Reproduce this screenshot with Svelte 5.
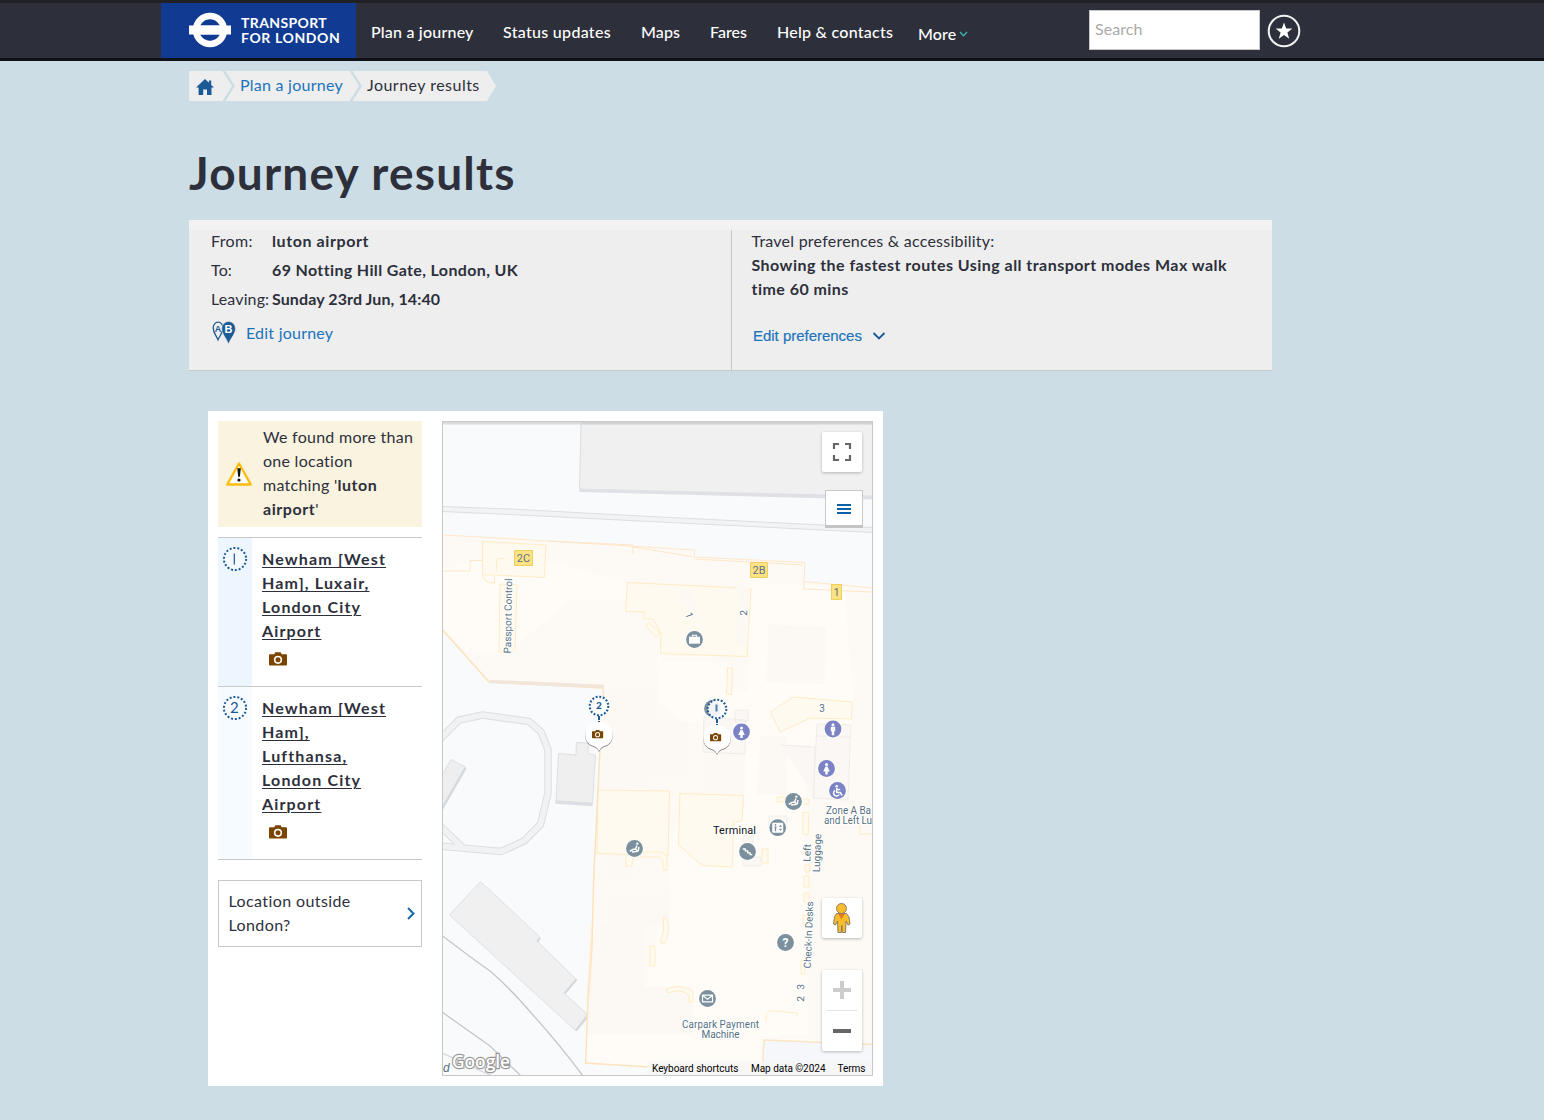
<script>
  const nav = [
    { label: 'Plan a journey', cls: 'n1' },
    { label: 'Status updates', cls: 'n2' },
    { label: 'Maps', cls: 'n3' },
    { label: 'Fares', cls: 'n4' },
    { label: 'Help & contacts', cls: 'n5' }
  ];
  const results = [
    { n: 1, lines: ['Newham [West', 'Ham], Luxair,', 'London City', 'Airport'] },
    { n: 2, lines: ['Newham [West', 'Ham],', 'Lufthansa,', 'London City', 'Airport'] }
  ];
  const markers = [
    { n: 2, x: 599, y: 706 },
    { n: 1, x: 717, y: 709 }
  ];
  const pois = [
    { kind: 'bag', x: 694.5, y: 639.5 },
    { kind: 'none', x: 712.5, y: 708.5 },
    { kind: 'woman', x: 741.5, y: 732, blue: true },
    { kind: 'man', x: 833, y: 729, blue: true },
    { kind: 'woman', x: 826.5, y: 768.5, blue: true },
    { kind: 'wheel', x: 837.5, y: 790.5, blue: true },
    { kind: 'seat', x: 793.5, y: 801.5 },
    { kind: 'lift', x: 777.7, y: 827.7 },
    { kind: 'stairs', x: 747.5, y: 851.5 },
    { kind: 'seat', x: 634.5, y: 848.5 },
    { kind: 'help', x: 785.5, y: 942.5 },
    { kind: 'mail', x: 707.5, y: 998.5 }
  ];
</script>

{#snippet camera(color)}
  <path fill={color} fill-rule="evenodd" d="M1 2.2h4.2L6.4.2h5.2l1.2 2h4.2q1 0 1 1v9.4q0 1-1 1H1q-1 0-1-1V3.200q0-1 1-1zM9 3.700a4.100 4.100 0 1 0 0 8.200a4.100 4.100 0 1 0 0-8.200zM9 5.300a2.500 2.500 0 1 1 0 5a2.500 2.500 0 1 1 0-5z" />
{/snippet}

<header>
  <a class="brand" href="#home" aria-label="Home">
    <svg width="42" height="36" viewBox="0 0 42 36">
      <path d="M0 13.500h42v9H0z" fill="#fff" />
      <circle cx="21" cy="18" r="14" fill="none" stroke="#fff" stroke-width="6.500" />
      <path d="M6 13.500h30v9H6z" fill="#fff" />
    </svg>
    <span class="word"><span class="w1">TRANSPORT</span><span class="w2">FOR LONDON</span></span>
  </a>
  <nav>
    {#each nav as item}
      <a class={item.cls} href="#nav">{item.label}</a>
    {/each}
    <a class="more" href="#more">More<svg width="9" height="6" viewBox="0 0 9 6"><path d="M1 1l3.500 3.700L8 1" fill="none" stroke="#3fb5b5" stroke-width="1.300" /></svg></a>
  </nav>
  <div class="search">Search</div>
  <svg class="fav" width="34" height="34" viewBox="0 0 34 34">
    <circle cx="17" cy="17" r="15.300" fill="none" stroke="#f2f2f4" stroke-width="2" />
    <path d="M17 8.500l2.200 6h6.200l-5 3.900 1.800 6.300-5.200-3.800-5.200 3.800 1.800-6.300-5-3.900h6.200z" fill="#fff" />
  </svg>
</header>

<main>
  <div class="crumbs">
    <svg width="307" height="30" viewBox="0 0 307 30">
      <path d="M0 0h33.500l9.500 15-9.500 15H0zM36.500 0H160.500l9.500 15-9.500 15H36.500L46 15zM163.500 0H298l9 15-9 15H163.500L173 15z" fill="#eee" />
      <path d="M16 8l-9 8.600h2.600V24h4.600v-5.500h3.800V24h4.500v-7.400H25l-2.800-2.700V9.500h-2.300v2.200z" fill="#1c5a96" />
    </svg>
    <div class="trail"><a href="#plan">Plan a journey</a><span>Journey results</span></div>
  </div>

  <h1>Journey results</h1>

  <section class="summary">
    <div class="left">
      <div class="row"><span class="k from">From:</span><b class="v1">luton airport</b></div>
      <div class="row"><span class="k">To:</span><b class="v2">69 Notting Hill Gate, London, UK</b></div>
      <div class="row"><span class="k">Leaving:</span><b class="v3">Sunday 23rd Jun, 14:40</b></div>
      <a class="edit" href="#edit">
        <svg width="25" height="24" viewBox="0 0 25 24">
          <path d="M6 18.800C4 14 1.200 12 1.200 6.700A4.900 5.500 0 0 1 11 6.700C11 12 8 14 6 18.800z" fill="#eee" stroke="#1c5a96" stroke-width="1.300" />
          <text x="6" y="10.800" class="pin" fill="#1c5a96">A</text>
          <path d="M16.500 23C14 16.500 9.800 13 9.800 7.500A6.800 7 0 0 1 23.400 7.500C23.400 13 19 16.500 16.500 23z" fill="#1c5a96" stroke="#eee" stroke-width=".5" />
          <text x="16.700" y="11.700" class="pin big" fill="#fff">B</text>
        </svg>
        <span>Edit journey</span>
      </a>
    </div>
    <div class="right">
      <div class="pt">Travel preferences &amp; accessibility:</div>
      <b>Showing the fastest routes Using all transport modes Max walk<br />time 60 mins</b>
      <a class="prefs" href="#prefs">Edit preferences<svg width="14" height="9" viewBox="0 0 14 9"><path d="M1.500 1L7 6.500 12.500 1" fill="none" stroke="#1c5a96" stroke-width="1.900" /></svg></a>
    </div>
  </section>

  <section class="card">
    <div class="side">
      <div class="warn">
        <svg width="28" height="26" viewBox="0 0 28 26">
          <path d="M14 2.500L25.800 23.500H2.200z" fill="#fffef8" stroke="#fdbd10" stroke-width="2.400" stroke-linejoin="round" />
          <path d="M12.300 7.300h3.500l-.9 8.500h-1.700z" fill="#111" /><circle cx="14" cy="19" r="1.600" fill="#111" />
        </svg>
        <p>We found more than<br />one location<br />matching '<b>luton<br />airport</b>'</p>
      </div>
      <ol>
        {#each results as r}
          <li>
            <div class="num">
              <svg width="26" height="26" viewBox="0 0 26 26">
                <circle cx="13" cy="13" r="11.100" fill="#fff" fill-opacity=".35" stroke="#1c5a96" stroke-width="2" stroke-dasharray="2 1.874" />
                {#if r.n === 1}<path d="M12.300 7.500v11" stroke="#1c5a96" stroke-width="1.200" />{:else}<text x="12.400" y="18.300" class="numeral">2</text>{/if}
              </svg>
            </div>
            <div class="info">
              <a href="#result">{#each r.lines as line, i}{#if i}<br />{/if}{line}{/each}</a>
              <svg class="cam" width="18" height="14" viewBox="0 0 18 14">{@render camera('#7b4500')}</svg>
            </div>
          </li>
        {/each}
      </ol>
      <a class="outside" href="#outside">
        <span>Location outside<br />London?</span>
        <svg width="8" height="13" viewBox="0 0 8 13"><path d="M1 1l5.500 5.500L1 12" fill="none" stroke="#1c66a8" stroke-width="2" /></svg>
      </a>
    </div>

    <svg class="map" width="431" height="655" viewBox="442 421 431 655">
      <rect x="442" y="421" width="431" height="655" fill="#f8fafc" />
      <!-- neighbouring building and access road -->
      <path d="M581 421H873V498L579.500 491z" fill="#f0f0f0" />
      <path d="M581 424L579.500 489" stroke="#dedede" fill="none" />
      <path d="M579.500 488.500L660 490.500 873 495.500v4L579.500 492z" fill="#dfe1e6" />
      <path d="M442 506.500L510 509 660 517 873 527.500v5L660 522 510 514.500 442 511.500z" fill="#f2f3f4" stroke="#dddfe2" />
      <!-- ring road -->
      <path d="M438 741L459 720 482.500 715 529 721.500 541 732 548 749.500V793L540.500 824.500 524 841 501 851.500 462 848 438 846M438 824l24 23" fill="none" stroke="#dcdee0" stroke-width="7.500" />
      <path d="M438 741L459 720 482.500 715 529 721.500 541 732 548 749.500V793L540.500 824.500 524 841 501 851.500 462 848 438 846M438 824l24 23" fill="none" stroke="#f1f2f3" stroke-width="5.500" />
      <path d="M442 775L451 759.500 465.500 767 442 808z" fill="#eee" stroke="#dddfe2" />
      <path d="M465.500 768L442 809" stroke="#d5d9de" stroke-width="2.500" />
      <path d="M558.500 753.500L576 755 576.500 742.500 588.500 743 588 753.500 595.500 755 592.500 804 556 801.500z" fill="#efefef" stroke="#dfe0e3" />
      <path d="M555.500 802l37 2.500" stroke="#dcdee3" stroke-width="3.500" />
      <path d="M480.500 881.500L540 937 537 941 576.500 979.500 564.500 993.500 587 1014 575.500 1030.500 449.500 915z" fill="#f0f0f0" stroke="#e0e1e3" />
      <path d="M540 938l-3 4M576.500 979.500l-12 14M587 1017l-11 13.500" stroke="#d5d7da" stroke-width="2" />
      <path d="M442 935.500Q470 957 490 971Q510 988 533 1015Q560 1045 583 1076M442 1012L490 1046 521 1076" fill="none" stroke="#c4c7ca" stroke-width="1.300" />
      <path d="M442 1053l50 23" stroke="#d9dbde" stroke-width="1.500" />

      <!-- terminal floor -->
      <path d="M442 535L480 537 548 541 597 543 633 545V547.500L694.500 550V557L805 562.500V581.500L873 588V1043L764 1040 762 1076 585 1063 588 1000 594 870 598 790 602 705 603 688 489 682 442 629z" fill="#fdf9f5" />
      <path d="M442 573L470 571 480 560H542L630 583 690 600V655L660 655 658 700 686 722H702V790L670 840V910L660 920 645 990 710 990 700 1000 585 1034V1063L762 1072 764 1040 803 1030 806 780 850 770 853 690 848 640 845 590 808 585H748V692H730V662H658L665 590 570 600 513 648 500 654 465 651 442 629z" fill="#fffcf7" />
      <path d="M442 571L480 560V577L500 583V651L465 651 442 629z" fill="#fffcf7" />
      <path d="M516 576h52l60 8v17h-60l-55 45z" fill="#fffcf7" />
      <path d="M604 688H658V722H688V775H648V788L600 790z" fill="#fcf9f5" />
      <path d="M608 855h24v24h-24zM610 894h59v31h-59zM588 925h55v62h60v48H588z" fill="#fcf9f5" />
      <path d="M748 589H843V662L830 675 852 698V760H748z" fill="#fffcf7" />
      <path d="M768.500 624L826.500 627 825 684 766 683z" fill="#fcf9f5" />
      <path d="M703 720H745V795H703zM760 736H787V795H757z" fill="#fcf9f5" />
      <path d="M808 802L873 801V1043L803 1030z" fill="#fdf9f5" />
      <path d="M693 884h115v150H693z" fill="#fffcf8" />
      <path d="M650 990h43v44h-43z" fill="#fcf9f5" />

      <!-- rooms -->
      <g fill="#fffaef" stroke="#ffecc4">
        <path d="M482.500 541.500L546 545 544.500 577.500 494 575 482.500 575z" />
        <path d="M627.500 582.500L751 588.500 747 656.500 660.500 653.500 661 633 653 619 644 618.500V612L625.500 611.500z" />
        <path d="M598 790L669.500 791 668 855.500 597 853.500z" />
        <path d="M680 793.500L743.500 795.500 742 821 733.500 822 732.500 867 702 865.500 678.500 845z" />
        <path d="M770.500 712L793 697 852 702 851.500 719 810.500 718 780 732z" />
        <path d="M500 584l17 1-2 63-6 5-10-1zM727.500 668l5 .5-1 26-5-.5zM649 622l11 11-4 4-10-11zM803 812l6 1-1 22-5-1zM805 865h5v7h-5zM804 876h5v11h-5zM804 893h5v9h-5zM803 915h5v10h-5zM801 960h4v14h-4zM650 946h5v20h-5zM663 917l4 2q4 14-3 25l-4-2q5-10 3-25zM777 797h8v5h-8zM801 799h8v5h-8zM762 849h6v14h-6z" />
        <path d="M626 866v-9q2-5 8-5h26q7 1 7 8v10h-4v-9q-1-4-5-4h-23q-3 0-3 9zM666 989q17-6 27 3v10h-4v-7q-9-7-21-2z" />
        <path d="M505 558.500h-5q-3 0-3.500 3v9M482.500 575q1 8 12 8v-7M860 824v10h13M766 1022v-7q2-5 9-4l22 2v4" fill="none" />
      </g>
      <path d="M672 586L689 591 708 640 696 620zM736 584l13 3-2 60q-15-2-12-14l6-30z" fill="#fcf9f5" />
      <g fill="none" stroke="#ffe7c9">
        <path d="M442 535L480 537 548 541 633 545V554M548 541L694.500 550V556.500M633 547L694.500 557 805 562.500 803.500 589L873 592M694.500 559L803 565M804 581.500L873 588M442 571H470V560.500H482" />
        <path d="M442 629L489 682 603 688 603.500 705M600 750L598 790 594 870 592 940 588 1000 585.500 1063L650 1067" stroke-width="1.500" stroke="#fce3bd" />
        <path d="M592 940L588 1000" stroke-width="2.500" />
      </g>
      <path d="M490 681.500l114 5" stroke="#f2e6da" stroke-width="3.500" />
      <path d="M764 1040L873 1044V1076H762z" fill="#f5f7fb" />
      <path d="M762 1072L764 1040 873 1044.500" fill="none" stroke="#fbe5c4" stroke-width="1.500" />
      <g fill="#faf7f4" stroke="#f0ede9">
        <path d="M704 717l42 3-1 34-42-2zM735 710h13v11h-13zM817 724l34 1-3 75-35-2zM781 745l34 2-1 50M817 736l34 1" />
        <path d="M769 816h18v12h-18zM743 836h10v8h-10zM743 857h18v9h-18z" />
      </g>

      <!-- place labels -->
      <g class="gate"><path d="M514.500 550.500h18v15h-18zM750.500 562.500h17v15h-17zM831.500 584.500h10v15h-10z" fill="#ffe284" stroke="#ecd05f" /><text x="523.500" y="562">2C</text><text x="759" y="574">2B</text><text x="836.500" y="596">1</text></g>
      <g class="place">
        <text transform="translate(511.500 616) rotate(-89)" textLength="75">Passport Control</text>
        <text transform="translate(686 616.500) rotate(70)">1</text>
        <text transform="translate(747 613) rotate(-88)">2</text>
        <text x="822" y="712">3</text>
        <text transform="translate(810.500 853) rotate(-88)">Left</text>
        <text transform="translate(820.500 853) rotate(-88)">Luggage</text>
        <text transform="translate(812 935) rotate(-88)" textLength="67">Check-In Desks</text>
        <text transform="translate(804 987) rotate(-88)">3</text>
        <text transform="translate(804 999) rotate(-88)">2</text>
        <text x="720.500" y="1027.500" textLength="77">Carpark Payment</text>
        <text x="720.500" y="1037.500">Machine</text>
        <text class="start" x="826" y="813.500" textLength="45">Zone A Ba</text>
        <text class="start" x="824" y="823.500" textLength="48">and Left Lu</text>
        <text class="terminal" x="734.500" y="834" textLength="43">Terminal</text>
        <text class="start road" transform="translate(443 1072)">d</text>
      </g>

      <!-- points of interest -->
      {#each pois as p}
        <g transform="translate({p.x} {p.y})">
          <circle r="9.300" fill="#fff" />
          <circle r="8.400" fill={p.blue ? '#7b83c5' : '#7b909c'} />
          {#if p.kind === 'bag'}
            <path d="M-5.500-2.800h11v7h-11z" fill="#fff" /><path d="M-2-2.800v-1.500h4v1.500" fill="none" stroke="#fff" stroke-width="1.100" />
          {:else if p.kind === 'woman'}
            <circle cy="-4" r="1.500" fill="#fff" /><path d="M-1-2h2l2.300 5H1.200v3h-2.400V3h-2.100z" fill="#fff" />
          {:else if p.kind === 'man'}
            <circle cy="-4.300" r="1.500" fill="#fff" /><path d="M-2.200-2.300h4.400v4.500H1.200v4h-2.400v-4h-1z" fill="#fff" />
          {:else if p.kind === 'wheel'}
            <circle cx="-.8" cy="-4.300" r="1.300" fill="#fff" /><path d="M-.8-2.500V2h3.500l2 3M-.8-1h3.500M-2.500 0a3 3 0 1 0 4.200 4" fill="none" stroke="#fff" stroke-width="1.500" />
          {:else if p.kind === 'seat'}
            <circle cx="2.800" cy="-4.900" r="1.200" fill="#fff" /><path d="M2.500-3L1 .6l-2.600.4-3.200 1.900M-2.500 3.500l4.500-.5q2 0 2-2l.4-2.500M1 .6L2.500 2" fill="none" stroke="#fff" stroke-width="1.500" />
          {:else if p.kind === 'lift'}
            <rect x="-5.500" y="-5" width="11" height="10" rx="1" fill="#fff" /><path d="M-2.200-1v4.500M-3.300-.5h2.200" stroke="#7b909c" stroke-width="1.300" /><path d="M1-1L2.700-3 4.400-1zM1 1L2.700 3 4.400 1z" fill="#7b909c" /><circle cx="-2.200" cy="-2.800" r=".9" fill="#7b909c" />
          {:else if p.kind === 'stairs'}
            <path d="M-4.800-2.500h2.600v1.900H.2v1.900h2.400v1.900h2.200" fill="none" stroke="#fff" stroke-width="1.300" />
          {:else if p.kind === 'mail'}
            <path d="M-5-3.300H5v6.600H-5zL0 .7l5-4" fill="none" stroke="#fff" stroke-width="1.200" />
          {:else if p.kind === 'help'}
            <text class="q" y="4.400">?</text>
          {/if}
        </g>
      {/each}

      {#each markers as m}
        <g transform="translate({m.x} {m.y})">
          <path d="M0 10v8" stroke="#1c5a96" stroke-width="2" stroke-dasharray="4 1 1.500 1" />
          <circle r="9.300" fill="#fff" fill-opacity=".9" stroke="#1c5a96" stroke-width="2.100" stroke-dasharray="1.900 1.753" />
          {#if m.n === 2}<text class="mk" y="2.500">2</text>{:else}<path d="M-.5-4.500v7" stroke="#4a80ad" stroke-width="2" />{/if}
          <path class="balloon" d="M-13.800 28.500a13.800 12.500 0 0 1 27.600 0q0 9.500-9.300 11.800Q1.500 41.500 0 45Q-1.500 41.500-4.500 40.300Q-13.800 38-13.800 28.500z" fill="#fff" />
          <g transform="translate(-7 23.800) scale(.62)">{@render camera('#7b4500')}</g>
        </g>
      {/each}

      <!-- attribution -->
      <text class="google" x="452" y="1067.500" textLength="58" lengthAdjust="spacingAndGlyphs">Google</text>
      <path d="M647 1061.500h225V1076H647z" fill="#f5f5f5" fill-opacity=".75" />
      <g class="legal"><text x="652" y="1072" textLength="86.500">Keyboard shortcuts</text><text x="751" y="1072" textLength="74.500">Map data ©2024</text><text x="837.500" y="1072" textLength="28">Terms</text></g>

      <!-- controls -->
      <g class="ctl" fill="#fff"><rect x="822" y="432" width="40" height="40" rx="2" /><rect x="822" y="898" width="40" height="40" rx="2" /><rect x="822" y="970" width="40" height="81" rx="2" /></g>
      <path d="M834 449v-5h5M845 444h5v5M850 455v5h-5M839 460h-5v-5" fill="none" stroke="#666" stroke-width="2.200" />
      <rect x="825.500" y="490.500" width="37" height="36" fill="#fff" stroke="#c8c8c8" />
      <path d="M825 526.500h38" stroke="#c4c4c4" stroke-width="3" />
      <path d="M837 505h14M837 509h14M837 513h14" stroke="#0d5fa6" stroke-width="2" />
      <path d="M842 981v18M833 990h18" stroke="#ccc" stroke-width="4" />
      <path d="M827 1010.500h30" stroke="#e3e3e3" />
      <path d="M833 1031h18" stroke="#666" stroke-width="4" />
      <g stroke="#7a7468" stroke-width=".9">
        <path d="M836.500 913.500h10l2.500 3.500 1 7-2 1-2-4-.5 11.500h-3.200l-.5-7-.5 7h-3.300l-.5-11.500-2 4-2-1 1-7z" fill="#fbbc2c" />
        <path d="M838 913.500h7l-3.500 6z" fill="#dd7c22" stroke="none" />
        <circle cx="841.500" cy="908.500" r="5" fill="#fbbc2c" />
      </g>
      <path d="M442 421h431v3.500H442z" fill="#000" fill-opacity=".12" />
      <rect x="442.500" y="421.500" width="430" height="654" fill="none" stroke="#c8c8c8" />
    </svg>
  </section>
</main>

<style>
  :global(body) { background: #cddde6; }
  * { box-sizing: border-box; }
  a { color: inherit; text-decoration: none; }
  svg { display: block; flex: none; }
  header, main { font: 16px/24px Lato, sans-serif; color: #2d303b; white-space: nowrap; }

  header { display: flex; align-items: flex-start; height: 61px; padding-left: 161px; background: #2d303b; border-top: 3px solid #1f2125; border-bottom: 3px solid #111318; color: #fff; }
  .brand { display: flex; width: 195px; height: 55px; background: #113b92; padding: 8.500px 0 0 28px; gap: 10px; }
  .word { display: flex; flex-direction: column; padding-top: 3.500px; font-size: 14px; line-height: 15px; font-weight: 700; }
  .w1 { letter-spacing: .38px; }
  .w2 { letter-spacing: .6px; }
  nav { display: flex; width: 733px; padding: 17px 0 0 15px; font-weight: 500; }
  .n1 { width: 132px; letter-spacing: .2px; }
  .n2 { width: 138px; letter-spacing: .3px; }
  .n3 { width: 69px; letter-spacing: .1px; }
  .n4 { width: 67px; }
  .n5 { width: 141px; letter-spacing: .25px; }
  .more { display: flex; align-items: center; gap: 3px; height: 24px; margin-top: 2px; letter-spacing: .1px; }
  .search { width: 171px; height: 40px; margin-top: 7px; padding: 6px 5px; background: #fff; border: 1px solid #c8c8c8; color: #aaa; letter-spacing: .05px; }
  .fav { margin: 11px 0 0 7px; }

  main { padding: 10px 0 0 189px; }
  .crumbs { display: grid; width: 307px; height: 30px; }
  .crumbs > * { grid-area: 1 / 1; }
  .trail { display: flex; gap: 24px; padding: 2px 0 0 51px; letter-spacing: .25px; }
  .trail a, .edit, .prefs { color: #1c74bb; }
  .trail span { letter-spacing: .48px; }
  h1 { margin: 43px 0 18px; height: 58px; font-size: 46px; line-height: 58px; font-weight: 700; letter-spacing: 1.200px; }

  .summary { display: flex; width: 1083px; height: 151px; background: #eee; border-top: 10px solid #f2f2f2; border-bottom: 1px solid #c8caca; }
  .left { width: 543px; padding-left: 22px; border-right: 1px solid #c8c8c8; }
  .row { display: flex; height: 29px; line-height: 22px; }
  .k { width: 61px; letter-spacing: .13px; }
  .from { letter-spacing: .38px; }
  .v1 { letter-spacing: .59px; }
  .v2 { letter-spacing: .36px; }
  .v3 { letter-spacing: .1px; }
  .edit { display: flex; gap: 9px; padding: 4px 0 0 1px; letter-spacing: .22px; }
  .pin { font: 700 9px "Liberation Sans", sans-serif; text-anchor: middle; }
  .big { font-size: 11px; }
  .right { margin-top: -1px; padding-left: 19.500px; }
  .right b { letter-spacing: .46px; }
  .pt { letter-spacing: .23px; }
  .prefs { display: flex; align-items: center; gap: 10px; padding: 23px 0 0 1.500px; font: 15px/24px "Liberation Sans", sans-serif; letter-spacing: -.02px; -webkit-text-stroke: .2px #1c74bb; }

  .card { display: flex; gap: 20px; width: 675px; height: 675px; margin: 40px 0 0 19px; padding: 10px; background: #fff; }
  .side { width: 204px; }
  .warn { display: flex; align-items: center; gap: 10px; height: 106px; padding: 0 0 0 7px; background: #f9f3e0; letter-spacing: .27px; }
  .warn p { margin: -2px 0 0; }
  .warn b { letter-spacing: .56px; }
  ol { list-style: none; margin: 10px 0 20px; padding: 0; border-bottom: 1px solid #c8c8c8; }
  li { display: flex; border-top: 1px solid #c8c8c8; }
  .num { width: 34px; padding: 8px 0 0 4px; background: #edf6ff; }
  li:nth-child(2) .num { background: #f6fbff; }
  .numeral { font: 15px Lato, sans-serif; fill: #1c5a96; text-anchor: middle; }
  .info { padding: 9px 0 20px 10px; font-weight: 700; letter-spacing: 1.160px; }
  .info a { text-decoration: underline; text-underline-offset: 2px; text-decoration-thickness: 1px; }
  .cam { margin: 9px 0 0 7px; }
  .outside { display: flex; align-items: center; justify-content: space-between; height: 67px; padding: 0 6px 1px 9.500px; border: 1px solid #c8c8c8; letter-spacing: .4px; }

  .place text, .gate text, .legal text { font: 10px Roboto, sans-serif; text-anchor: middle; }
  .gate text { font-size: 11px; fill: #5c7482; }
  .place text { fill: #55707f; stroke: #fff; stroke-width: 2px; paint-order: stroke; }
  .place .start { text-anchor: start; }
  .place .terminal { font-size: 11px; fill: #111; }
  .place .road { font: italic 12px "Liberation Sans", sans-serif; }
  .legal text { text-anchor: start; fill: #000; }
  .q { font: 700 12px Roboto, sans-serif; text-anchor: middle; fill: #fff; }
  .mk { font: 900 10px Lato, sans-serif; text-anchor: middle; fill: #1c5a96; }
  .google { font: 600 18px "Open Sans", sans-serif; fill: #fff; stroke: #989898; stroke-width: 2.400px; paint-order: stroke; }
  .balloon { filter: drop-shadow(0 1.500px .6px #888); }
  .ctl { filter: drop-shadow(0 1px 1.500px rgb(0 0 0 / .25)); }
</style>
